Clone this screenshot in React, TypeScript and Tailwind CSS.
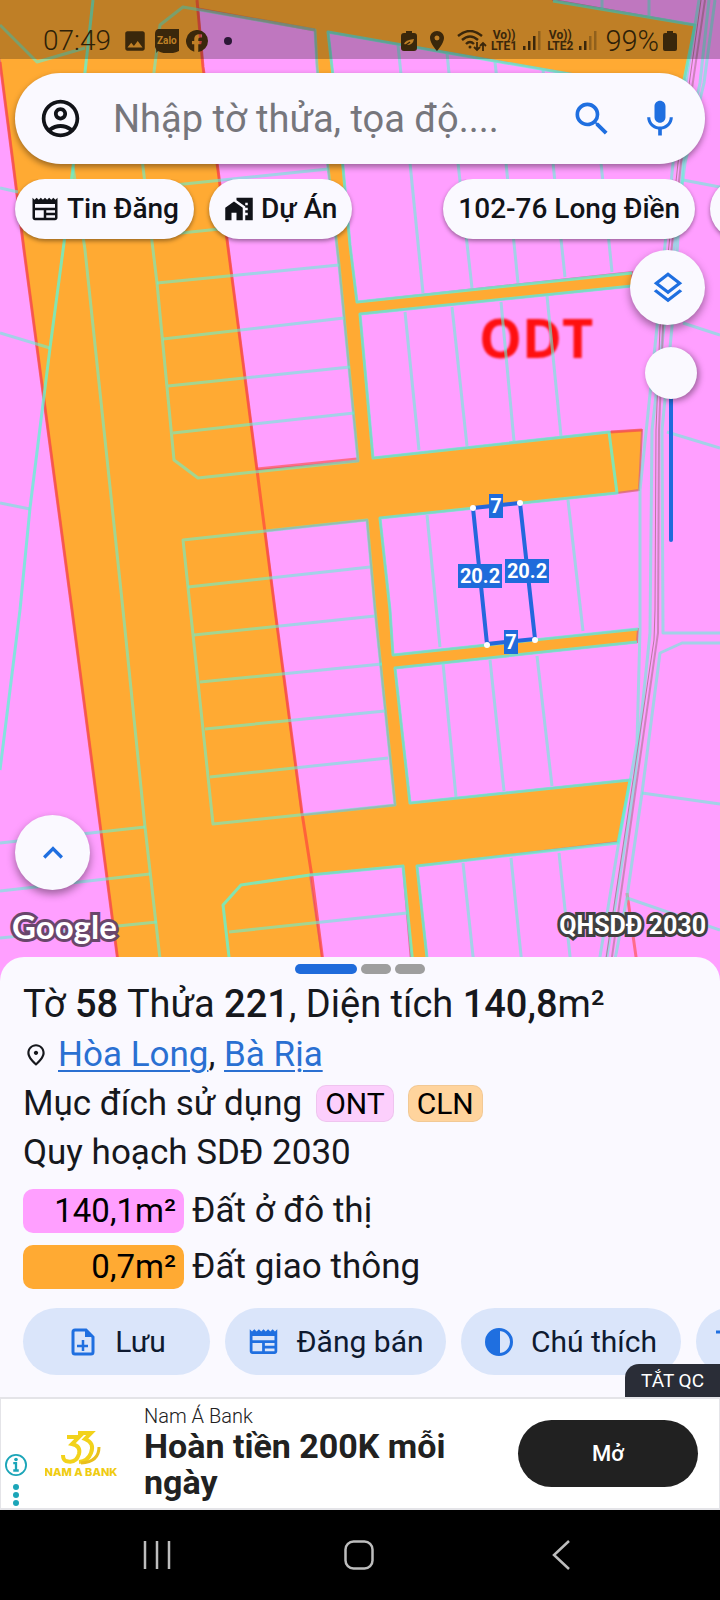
import React from 'react';
import {
  MdHomeWork,
  MdImage,
  MdKeyboardArrowUp,
  MdMic,
  MdOutlineAccountCircle,
  MdOutlineLayers,
  MdOutlineNewspaper,
  MdOutlinePlace,
  MdPlace,
  MdSearch,
} from 'react-icons/md';

const ROADS = [
  'M-5 -5H553V0L695 25L682 93L328 32L332 67L343 167L350 245L357 302L632 272L632 286L360 314L373 458L609 432L642 430L639 490L617 493L380 518L390 610L393 655L638 629L637 642L395 668L410 803L630 780L618 842L417 866L427 957V985H413L403 866L310 875L322 957V985H121L72 610L24 250L13 163L0 62L-5 40Z',
];

// pink blocks sitting inside the road area
const BLOCKS = [
  'M198 9L315 30L317 67L328 167L339 265L358 461L257 470L228 247L218 170L203 67Z',
  'M265 531L367 520L375 610L395 805L302 815L275 610Z',
];

const PARCELS = [
  'M183 7L160 25L154 72L141 150L143 167L157 283L174 460L198 478L358 461L339 265L328 167L317 67L315 30Z',
  'M146 188L328 169M152 236L334 217M157 283L339 265M163 339L344 318M168 386L350 367M173 433L354 413',
  'M183 540L367 520L375 610L395 805L213 824Z',
  'M188 587L370 567M194 635L375 616M200 682L382 664M205 729L385 711M210 777L388 758M229 932L407 913',
  'M73 167L85 250L123 610L145 827L163 985',
  'M0 843L145 827M0 891L150 874M0 938L157 922',
  'M0 188L18 192M0 333L50 348M0 503L30 509M0 25L37 62L85 48',
  'M398 45L410 163L423 293M447 53L458 163L472 288M495 62L506 163L518 283M543 70L553 163L565 277M591 80L601 163L612 272',
  'M602 0V9M649 0V17',
  'M405 312L419 450M452 307L467 446M501 302L514 441M547 296L561 436',
  'M427 515L440 647M568 500L583 631',
  'M443 663L456 797M490 660L504 791M537 656L552 786',
  'M463 863L475 975M511 858L523 975M559 853L572 975',
  'M683 180L720 187M683 323L720 335M667 432L720 448M642 793L720 804M627 898L720 930',
  'M699 0L695 25L673 163L657 327L640 490V630L637 743L618 847L597 975',
  'M709 0L700 83L683 163L672 327L662 430L663 633H720M720 643H682L660 653L642 793L627 897L612 975',
  'M715 0L704 83L685 163L664 327L652 430L650 633L634 787L604 975',
];

const BRIGHT = [
  'M93 0L85 72L73 167L64 243L50 348L30 508L20 610L0 770',
  'M553 1L695 25L680 100',
  'M690 95L328 32L332 67L343 167L350 245L357 302L632 273',
  'M632 286L360 314L373 458L609 432L617 493L380 518L390 610L393 655L638 629',
  'M637 642L395 668L410 803L630 780L618 843L417 866L430 985',
  'M415 985L403 866L310 875L241 885L223 905L229 957L232 985',
];

const MeasureTag = ({ x, y, w, label }: { x: number; y: number; w: number; label: string }) => (
  <g>
    <rect x={x - w / 2} y={y - 12} width={w} height={24} fill="#1f6bdb" />
    <text x={x} y={y + 7} textAnchor="middle" fill="#fff" fontSize="20" fontWeight="700" fontFamily="Roboto, sans-serif">
      {label}
    </text>
  </g>
);

const PlanMap = () => (
  <svg viewBox="0 0 720 981" preserveAspectRatio="xMidYMin slice" className="absolute inset-0 h-full w-full">
    <rect width="720" height="981" fill="#ff9fff" />
    <g stroke="#d8687c" strokeOpacity="0.8" strokeWidth="2">
      {ROADS.map((d) => <path key={d} d={d} fill="#ffaa33" />)}
      {BLOCKS.map((d) => <path key={d} d={d} fill="#ff9fff" />)}
    </g>

    {/* zoning boundary */}
    <g fill="none" stroke="#ff4b3c" strokeWidth="3">
      <path d="M0 62L13 163L24 250L72 610L121 985" strokeOpacity="0.7" />
      <path d="M197 0L203 67L218 170L228 247L257 470L275 610L302 813L312 877L326 985" strokeOpacity="0.75" />
      <path d="M198 9L315 30M257 469L357 459M611 432L642 430M627 893L640 985" strokeOpacity="0.6" />
    </g>

    <text x="479" y="358" fontSize="54" fontWeight="700" fontFamily="'Open Sans', sans-serif" fill="#ff1010" className="blur-[1px]">
      ODT
    </text>

    <g fill="none" stroke="#61f5d5" strokeLinejoin="round">
      {PARCELS.map((d) => <path key={d} d={d} strokeWidth="3" strokeOpacity="0.58" />)}
      {BRIGHT.map((d) => <path key={d} d={d} strokeWidth="3" strokeOpacity="0.78" />)}
    </g>

    {/* canal */}
    <g fill="none" stroke="#b77b9f" strokeWidth="1">
      <path d="M701 0L678 163L660 327L656 430L655 610L654 640L632 787L602 985" />
      <path d="M705 0L681 163L663 327L659 430L658 633L636 787L608 985" strokeWidth="2" strokeOpacity="0.7" />
    </g>

    {/* selected parcel */}
    <path d="M473 508L520 503L535 639L487 644Z" fill="none" stroke="#2467dd" strokeWidth="4" />
    {[[473, 508], [520, 503], [535, 640], [487, 645]].map(([x, y]) => (
      <circle key={x} cx={x} cy={y} r="3" fill="#fff" />
    ))}
    <MeasureTag x={496} y={506} w={14} label="7" />
    <MeasureTag x={511} y={642} w={14} label="7" />
    <MeasureTag x={480} y={576} w={44} label="20.2" />
    <MeasureTag x={527} y={571} w={44} label="20.2" />
  </svg>
);

const SignalBars = ({ active }: { active: number }) => (
  <svg viewBox="0 0 18 20" className="h-5 w-[18px]" fill="currentColor">
    {[0, 1, 2, 3].map((i) => (
      <rect key={i} x={i * 5} y={15 - i * 5} width="2.5" height={4 + i * 5} opacity={i < active ? 1 : 0.35} />
    ))}
  </svg>
);

const SimLabel = ({ name }: { name: string }) => (
  <span className="flex flex-col items-center text-[12px] leading-[11px] font-bold">
    <span>Vo))</span>
    <span>{name}</span>
  </span>
);

const StatusBar = () => (
  <header className="flex h-[59px] items-center justify-between bg-black/25 pt-[22px] pr-[43px] pl-[43px] text-[#3a270b]">
    <div className="flex items-center gap-[7px]">
      <span className="mr-1 text-[28px] leading-8 font-light text-[#2e1f08]">07:49</span>
      <MdImage size={26} />
      <svg viewBox="0 0 24 24" className="h-6 w-6">
        <path d="M3 0H24V22Q13 27 3 22L1 24Q2 21 0 18V5Q0 1 3 0Z" fill="currentColor" />
        <text x="2" y="15" fontSize="10" fontWeight="700" fontFamily="Roboto, sans-serif" fill="#bf8026">Zalo</text>
      </svg>
      <svg viewBox="0 0 24 24" className="h-[22px] w-[22px]" fill="currentColor">
        <path d="M24 12a12 12 0 1 0-15 11.600v-8H6.500V12H9V10.400c0-4 1.900-5.900 5.900-5.900.8 0 2 .1 2.600.3v3.300h-1.500c-2 0-2.600.8-2.600 2.600V12h3.900l-.7 3.600h-3.200v8.300A12 12 0 0 0 24 12Z" />
      </svg>
      <span className="ml-[9px] h-2 w-2 rounded-full bg-[#2b1836]" />
    </div>

    <div className="flex items-center gap-1">
      <svg viewBox="0 0 16 20" className="mr-1 h-5 w-4">
        <path d="M5 0H11V2H13Q16 2 16 5V17Q16 20 13 20H3Q0 20 0 17V5Q0 2 3 2H5Z" fill="currentColor" />
        <path d="M3 13Q4 9 13 8Q12 14 6 14Z" fill="#bf8026" />
        <path d="M2 16L9 11" stroke="#3a270b" strokeWidth="1.500" />
      </svg>
      <MdPlace size={24} className="mr-1" />
      <svg viewBox="0 0 30 22" className="h-[22px] w-[30px]" fill="none" stroke="currentColor" strokeWidth="2.400">
        <path d="M1 6Q13-4 25 6M5 10Q13 3 21 10M9 14Q13 10 17 14" />
        <circle cx="13" cy="17" r="1.500" fill="currentColor" stroke="none" />
        <path d="M20 12V20M17 17L20 20L23 17M26 21V13M23 16L26 13L29 16" strokeWidth="1.800" />
      </svg>
      <SimLabel name="LTE1" />
      <span className="mx-[2px]"><SignalBars active={3} /></span>
      <SimLabel name="LTE2" />
      <span className="ml-[2px] mr-1"><SignalBars active={2} /></span>
      <span className="text-[29px] leading-8 font-light text-[#2e1f08]">99%</span>
      <svg viewBox="0 0 14 20" className="h-5 w-[14px]" fill="currentColor">
        <path d="M4 0H10V2H12Q14 2 14 4V18Q14 20 12 20H2Q0 20 0 18V4Q0 2 2 2H4Z" />
      </svg>
    </div>
  </header>
);

const SearchBar = () => (
  <form className="mx-[15px] mt-[14px] flex h-[91px] items-center rounded-full bg-[#faf9ff] px-[23px] text-[#1f6fe0] shadow-[0_3px_6px_rgba(0,0,0,0.4)]">
    <button type="button" aria-label="Account" className="text-[#111318]">
      <MdOutlineAccountCircle size={45} />
    </button>
    <input
      type="text"
      aria-label="Nhập tờ thửa, tọa độ"
      placeholder="Nhập tờ thửa, tọa độ...."
      className="ml-[30px] min-w-0 flex-1 bg-transparent text-[38px] leading-[50px] text-black outline-none placeholder:text-[#76767c]"
    />
    <button type="submit" aria-label="Search" className="mr-6"><MdSearch size={44} /></button>
    <button type="button" aria-label="Voice search"><MdMic size={44} /></button>
  </form>
);

const CHIP = 'flex h-[60px] shrink-0 items-center gap-[7px] rounded-full bg-[#faf9ff] px-[15px] text-[28px] font-medium whitespace-nowrap text-[#111318] shadow-[0_2px_4px_rgba(0,0,0,0.4)]';

const Chips = () => (
  <nav className="mt-[15px] flex gap-[15px] overflow-hidden pb-[11px] pl-[15px]">
    <button className={CHIP}><MdOutlineNewspaper size={30} />Tin Đăng</button>
    <button className={CHIP}><MdHomeWork size={30} />Dự Án</button>
    <button className={`${CHIP} ml-[76px]`}>102-76 Long Điền</button>
    <button aria-label="Next sheet" className={`${CHIP} w-40`} />
  </nav>
);

const ROUND = 'flex h-[75px] w-[75px] items-center justify-center rounded-full bg-[#faf9ff] text-[#1f6fe0] shadow-[0_4px_8px_rgba(0,0,0,0.4)]';

const MapTools = () => (
  <div className="mr-[15px] flex flex-col items-end gap-[22px] self-end">
    <button aria-label="Layers" className={ROUND}><MdOutlineLayers size={38} /></button>
    <input
      type="range"
      aria-label="Opacity"
      defaultValue={100}
      className="mr-2 h-[195px] w-[52px] appearance-none bg-transparent [direction:rtl] [writing-mode:vertical-lr] [&::-webkit-slider-runnable-track]:w-1 [&::-webkit-slider-runnable-track]:rounded-full [&::-webkit-slider-runnable-track]:bg-[#1f6bdb] [&::-webkit-slider-thumb]:-ml-6 [&::-webkit-slider-thumb]:h-[52px] [&::-webkit-slider-thumb]:w-[52px] [&::-webkit-slider-thumb]:appearance-none [&::-webkit-slider-thumb]:rounded-full [&::-webkit-slider-thumb]:bg-[#faf9ff] [&::-webkit-slider-thumb]:shadow-[2px_2px_6px_rgba(0,0,0,0.4)]"
    />
  </div>
);

const AREAS = [
  { area: '140,1m²', label: 'Đất ở đô thị', color: 'bg-[#ff9fff]' },
  { area: '0,7m²', label: 'Đất giao thông', color: 'bg-[#ffaa33]' },
];

const ACTION = 'flex h-[67px] shrink-0 items-center justify-center rounded-full bg-[#dae5fa] text-[30px] whitespace-nowrap text-[#0e1a30]';

const SaveIcon = () => (
  <svg viewBox="0 0 24 28" className="h-7 w-6" fill="none" stroke="#1f6fe0" strokeWidth="3">
    <path d="M14 2H4Q2 2 2 4V24Q2 26 4 26H20Q22 26 22 24V9L15 2Z" />
    <path d="M14 1V9H23Z" fill="#1f6fe0" stroke="none" />
    <path d="M12 12V23M6 18H17" strokeWidth="2.500" />
  </svg>
);

const ContrastIcon = () => (
  <svg viewBox="0 0 28 28" className="h-7 w-7">
    <circle cx="14" cy="14" r="12.500" fill="none" stroke="#1f6fe0" strokeWidth="3" />
    <path d="M15 1A13 13 0 0 0 15 27Z" fill="#1f6fe0" />
  </svg>
);

const DetailSheet = () => (
  <section className="relative -mt-6 rounded-t-3xl bg-[#faf9ff] pt-[7px] pb-[22px] text-[#16181d]">
    <div className="flex justify-center gap-1">
      <span className="h-[10px] w-[62px] rounded-full bg-[#1f6bdb]" />
      <span className="h-[10px] w-[30px] rounded-full bg-[#9e9e9e]" />
      <span className="h-[10px] w-[30px] rounded-full bg-[#9e9e9e]" />
    </div>

    <div className="mt-1 px-[23px] text-[35px] leading-[49px]">
      <h1 className="text-[38px] leading-[52px]">
        Tờ <b className="font-medium">58</b> Thửa <b className="font-medium">221</b>, Diện tích <b className="font-medium">140,8</b>m²
      </h1>
      <p className="flex items-center">
        <MdOutlinePlace size={26} className="mr-[9px]" />
        <a href="#hoa-long" className="text-[#2a70d2] underline decoration-2 underline-offset-4">Hòa Long</a>,&nbsp;
        <a href="#ba-ria" className="text-[#2a70d2] underline decoration-2 underline-offset-4">Bà Rịa</a>
      </p>
      <p className="flex items-center">
        Mục đích sử dụng
        <span className="ml-[14px] rounded-[10px] border border-black/5 bg-[#fccffc] px-2 text-[30px] leading-[35px] text-black">ONT</span>
        <span className="ml-[14px] rounded-[10px] border border-black/5 bg-[#ffd49d] px-2 text-[30px] leading-[35px] text-black">CLN</span>
      </p>
      <p>Quy hoạch SDĐ 2030</p>
    </div>

    <ul className="mt-3 flex flex-col gap-3 px-[23px]">
      {AREAS.map(({ area, label, color }) => (
        <li key={label} className="flex items-center gap-2 text-[35px] leading-[44px]">
          <span className={`${color} w-[161px] rounded-[10px] pr-2 text-right text-[33px] text-black`}>{area}</span>
          {label}
        </li>
      ))}
    </ul>

    <div className="mt-[19px] flex gap-[15px] overflow-hidden pl-[23px]">
      <button className={`${ACTION} w-[187px] gap-5 pl-1`}><SaveIcon />Lưu</button>
      <button className={`${ACTION} w-[221px] gap-4`}><MdOutlineNewspaper size={33} className="text-[#1f6fe0]" />Đăng bán</button>
      <button className={`${ACTION} w-[220px] gap-[18px]`}><ContrastIcon />Chú thích</button>
      <button aria-label="More" className={`${ACTION} w-[187px] justify-start pl-5`}>
        <svg viewBox="0 0 28 28" className="h-7 w-7" stroke="#1f6fe0" strokeWidth="3"><path d="M0 4H22" /></svg>
      </button>
    </div>

    <button className="absolute right-0 bottom-0 h-[33px] rounded-tl-[14px] bg-[#2a2d37] px-4 text-[19px] leading-[33px] text-white">
      TẮT QC
    </button>
  </section>
);

const BankLogo = () => (
  <svg viewBox="0 0 72 48" className="h-12 w-[72px]">
    <g fill="none" stroke="#f2d21b" strokeWidth="4">
      <path d="M22 7H34L27 14Q36 16 34 24Q31 34 21 31Q18 30 18 25" />
      <path d="M33 3H46L40 9Q50 13 46 23Q43 31 34 32" />
      <path d="M54 17Q54 32 36 33" strokeWidth="3" stroke="#e9bf1d" />
    </g>
    <text x="36" y="46" textAnchor="middle" fontSize="11" fontWeight="800" fontFamily="Inter, sans-serif" fill="#f0cc10">NAM A BANK</text>
  </svg>
);

const AdBanner = () => (
  <aside className="flex h-[113px] items-center border-x border-y-2 border-[#e4e4e8] bg-white pr-[21px]">
    <div className="mt-[55px] flex w-[30px] flex-col items-center gap-2 self-start text-[#1ba5b8]">
      <svg viewBox="0 0 24 24" className="h-[22px] w-[22px]" fill="none" stroke="currentColor" strokeWidth="2">
        <circle cx="12" cy="12" r="11" />
        <path d="M9 10H12V18M9 18H15" strokeWidth="2.500" />
        <circle cx="12" cy="6" r="2" fill="currentColor" stroke="none" />
      </svg>
      <svg viewBox="0 0 6 22" className="h-[22px] w-[6px]" fill="currentColor">
        <circle cx="3" cy="3" r="3" />
        <circle cx="3" cy="11" r="3" />
        <circle cx="3" cy="19" r="3" />
      </svg>
    </div>
    <div className="ml-[14px]"><BankLogo /></div>
    <div className="ml-[27px] min-w-0 flex-1 pb-1 text-[#212121]">
      <p className="text-[20px] leading-6 font-light">Nam Á Bank</p>
      <p className="max-w-[320px] text-[34px] leading-9 font-bold">Hoàn tiền 200K mỗi ngày</p>
    </div>
    <button className="h-[67px] w-[180px] rounded-full bg-[#212121] text-[22px] font-medium text-white">Mở</button>
  </aside>
);

const SystemNav = () => (
  <footer className="flex h-[90px] items-center justify-around bg-black pr-[58px] pl-14 text-[#bdbdbd]">
    <button aria-label="Recents">
      <svg viewBox="0 0 30 30" className="h-[30px] w-[30px]" stroke="currentColor" strokeWidth="2.500"><path d="M3 1V29M15 1V29M27 1V29" /></svg>
    </button>
    <button aria-label="Home">
      <svg viewBox="0 0 30 30" className="h-[30px] w-[30px]" fill="none" stroke="currentColor" strokeWidth="2.500"><rect x="1.500" y="1.500" width="27" height="27" rx="8" /></svg>
    </button>
    <button aria-label="Back">
      <svg viewBox="0 0 30 30" className="h-[30px] w-[30px]" fill="none" stroke="currentColor" strokeWidth="2.500"><path d="M23 1L8 15L23 29" /></svg>
    </button>
  </footer>
);

export default function App() {
  return (
    <div className="flex min-h-screen flex-col overflow-x-hidden bg-[#faf9ff] font-[Roboto,sans-serif]">
      <main className="relative flex flex-1 flex-col">
        <PlanMap />
        <div className="relative flex flex-1 flex-col">
          <StatusBar />
          <SearchBar />
          <Chips />
          <MapTools />
          <div className="mt-auto px-[15px]">
            <button aria-label="Expand" className={ROUND}><MdKeyboardArrowUp size={40} /></button>
          </div>
          <div className="mt-[14px] mb-[33px] flex items-center justify-between pr-[14px] pl-3 text-white">
            <span className="font-[Lato] text-[33px] leading-[44px] font-bold [-webkit-text-stroke:6px_#69466b] [paint-order:stroke_fill]">Google</span>
            <span className="text-[25px] leading-[44px] font-bold [-webkit-text-stroke:6px_#404040] [paint-order:stroke_fill]">QHSDĐ 2030</span>
          </div>
        </div>
      </main>
      <DetailSheet />
      <AdBanner />
      <SystemNav />
    </div>
  );
}
